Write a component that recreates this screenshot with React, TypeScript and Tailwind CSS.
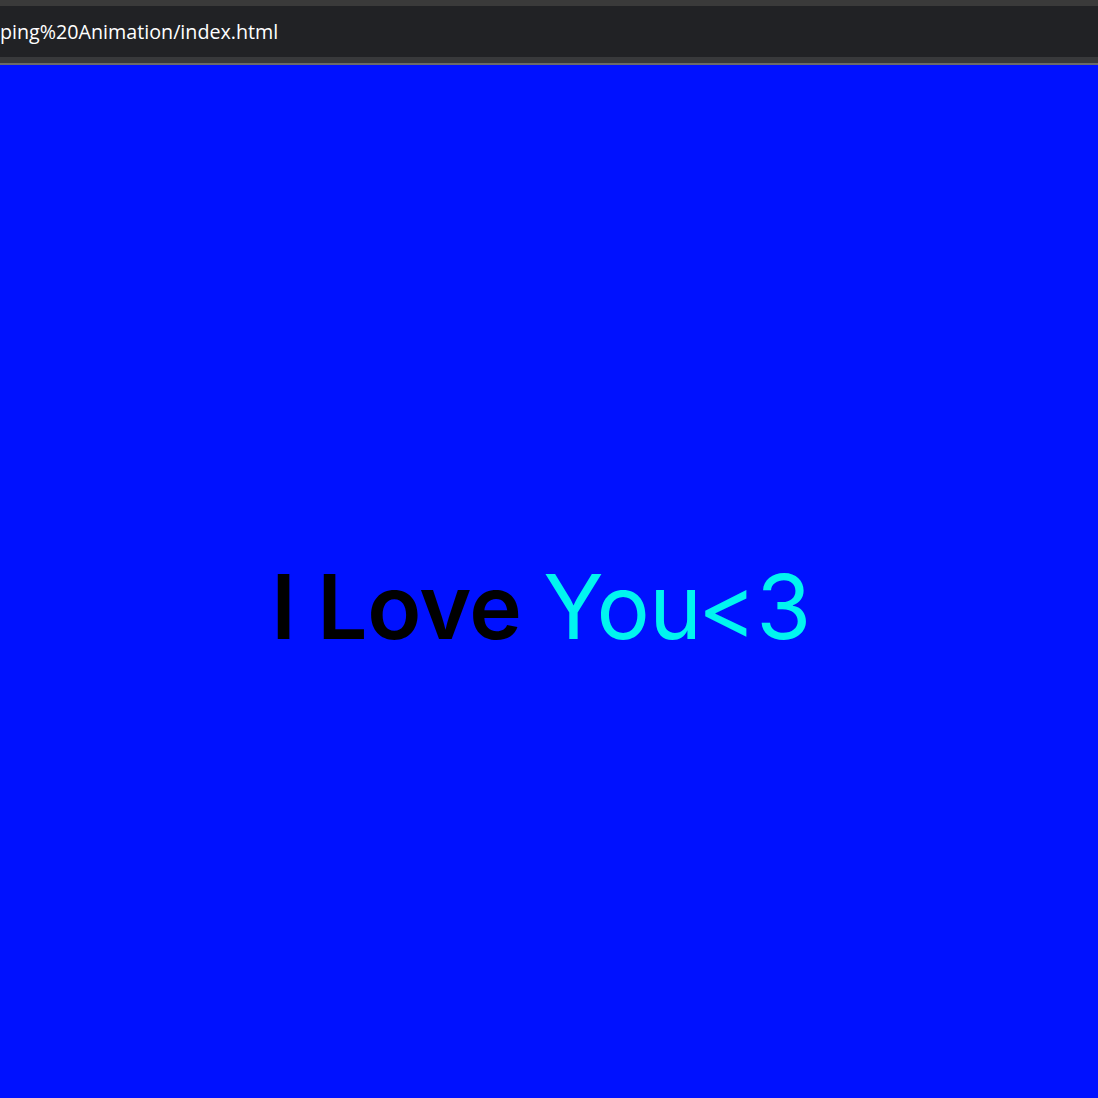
export default function App() {
  return (
    <div className="w-[1098px] h-[1098px] flex flex-col overflow-hidden">
      <div className="h-[6px] bg-[#3a3a3a]" />
      <div className="h-[51px] bg-[#212225] flex items-center">
        <span
          className="text-[19.7px] text-white leading-none whitespace-nowrap pt-[1px]"
          style={{ fontFamily: '"Open Sans", sans-serif' }}
        >
          ping%20Animation/index.html
        </span>
      </div>
      <div className="h-[6px] bg-[#38393b]" />
      <div className="h-[2px] bg-[#6a6a6a]" />
      <div className="flex-1 bg-[#0011ff] flex justify-center pt-[497px] pr-[16px]">
        <div
          className="text-[89px] leading-none whitespace-nowrap tracking-[-0.5px]"
          style={{ fontFamily: 'Inter, sans-serif' }}
        >
          <span className="text-black font-semibold">I Love </span>
          <span className="text-[#00f5f0] font-normal">You&lt;3</span>
        </div>
      </div>
    </div>
  );
}
